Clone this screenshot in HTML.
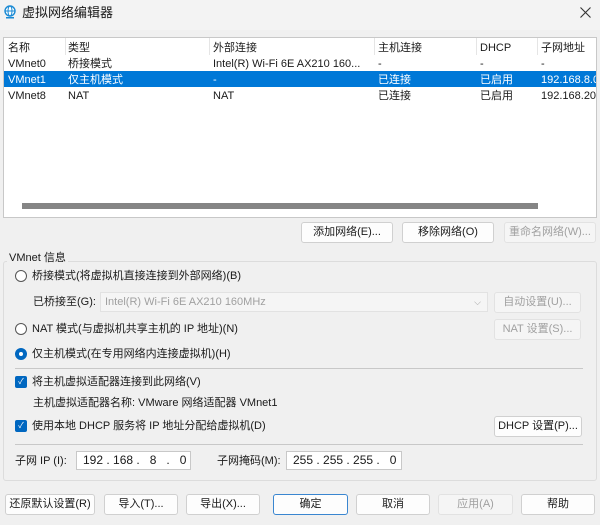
<!DOCTYPE html>
<html><head><meta charset="utf-8"><style>
*{margin:0;padding:0;box-sizing:border-box}
body{width:600px;height:525px;background:#f0f0f0;font-family:"Liberation Sans","Noto Sans CJK SC",sans-serif;font-size:11px;color:#1a1a1a;position:relative;overflow:hidden}
.a{position:absolute;white-space:nowrap;line-height:14px}
.btn{position:absolute;height:21px;background:#fdfdfd;border:1px solid #d0d0d0;border-radius:3px;text-align:center;line-height:19px;font-size:11px;white-space:nowrap;overflow:hidden}
.dis{background:#f5f5f5;color:#a0a0a0;border-color:#e2e2e2}
.radio{position:absolute;width:12px;height:12px;border:1px solid #555;border-radius:50%;background:#fff}
.chk{position:absolute;width:12px;height:12px;background:#0067c0;border-radius:2px;color:#fff;font-size:8px;line-height:12px;text-align:center}
.inp{position:absolute;height:19px;background:#fff;border:1px solid #c8c8c8;line-height:17px;padding-left:6px;white-space:nowrap;overflow:hidden;font-size:12px}
</style></head><body>
<div style="position:absolute;left:0;top:0;width:600px;height:30px;background:#f3f3f3"></div>
<svg style="position:absolute;left:4px;top:5px" width="12" height="14" viewBox="0 0 12 14"><circle cx="6" cy="6" r="5" fill="#fff" stroke="#1a8ad4" stroke-width="1.4"/><ellipse cx="6" cy="6" rx="2" ry="5" fill="none" stroke="#1a8ad4"/><line x1="1" y1="6" x2="11" y2="6" stroke="#1a8ad4"/><rect x="2" y="12" width="8" height="1.5" fill="#1a8ad4"/></svg>
<div class="a" style="left:22px;top:6px;font-size:13px">虚拟网络编辑器</div>
<svg style="position:absolute;left:580px;top:7px" width="11" height="11"><path d="M0.5 0.5L10.5 10.5M10.5 0.5L0.5 10.5" stroke="#333" stroke-width="1.1"/></svg>

<div style="position:absolute;left:3px;top:37px;width:594px;height:181px;background:#fff;border:1px solid #c8c8c8"></div>
<div style="position:absolute;left:4px;top:71px;width:592px;height:16px;background:#0078d7"></div>
<div style="position:absolute;left:22px;top:203px;width:516px;height:6px;background:#858585"></div>
<div class="a" style="left:8px;top:41px">名称</div><div class="a" style="left:68px;top:41px">类型</div><div class="a" style="left:213px;top:41px">外部连接</div><div class="a" style="left:378px;top:41px">主机连接</div><div class="a" style="left:480px;top:41px">DHCP</div><div class="a" style="left:541px;top:41px">子网地址</div>
<div style="position:absolute;left:65px;top:38px;width:1px;height:17px;background:#e5e5e5"></div>
<div style="position:absolute;left:209px;top:38px;width:1px;height:17px;background:#e5e5e5"></div>
<div style="position:absolute;left:374px;top:38px;width:1px;height:17px;background:#e5e5e5"></div>
<div style="position:absolute;left:476px;top:38px;width:1px;height:17px;background:#e5e5e5"></div>
<div style="position:absolute;left:537px;top:38px;width:1px;height:17px;background:#e5e5e5"></div>
<div class="a" style="left:8px;top:57px">VMnet0</div><div class="a" style="left:68px;top:57px">桥接模式</div><div class="a" style="left:213px;top:57px">Intel(R) Wi-Fi 6E AX210 160...</div><div class="a" style="left:378px;top:57px">-</div><div class="a" style="left:480px;top:57px">-</div><div class="a" style="left:541px;top:57px">-</div>
<div style="color:#fff"><div class="a" style="left:8px;top:73px">VMnet1</div><div class="a" style="left:68px;top:73px">仅主机模式</div><div class="a" style="left:213px;top:73px">-</div><div class="a" style="left:378px;top:73px">已连接</div><div class="a" style="left:480px;top:73px">已启用</div><div class="a" style="left:541px;top:73px">192.168.8.0</div></div>
<div style="position:absolute;left:596px;top:70px;width:4px;height:40px;background:#f0f0f0"></div>
<div class="a" style="left:8px;top:89px">VMnet8</div><div class="a" style="left:68px;top:89px">NAT</div><div class="a" style="left:213px;top:89px">NAT</div><div class="a" style="left:378px;top:89px">已连接</div><div class="a" style="left:480px;top:89px">已启用</div><div class="a" style="left:541px;top:89px">192.168.20</div>
<div style="position:absolute;left:596px;top:38px;width:1px;height:179px;background:#c8c8c8"></div>

<div class="btn" style="left:301px;top:222px;width:92px">添加网络(E)...</div>
<div class="btn" style="left:402px;top:222px;width:92px">移除网络(O)</div>
<div class="btn dis" style="left:504px;top:222px;width:92px">重命名网络(W)...</div>

<div style="position:absolute;left:3px;top:261px;width:594px;height:220px;border:1px solid #dcdcdc;border-radius:3px"></div>
<div class="a" style="left:7px;top:251px;background:#f0f0f0;padding:0 2px">VMnet 信息</div>
<div class="radio" style="left:15px;top:270px"></div><div class="a" style="left:32px;top:269px">桥接模式(将虚拟机直接连接到外部网络)(B)</div>
<div class="a" style="left:33px;top:295px">已桥接至(G):</div>
<div class="inp" style="left:100px;top:292px;width:388px;height:20px;background:#f5f5f5;border-color:#e2e2e2;color:#a0a0a0;line-height:18px;padding-left:4px;font-size:11px">Intel(R) Wi-Fi 6E AX210 160MHz<span style="position:absolute;right:6px;font-size:9px">⌵</span></div>
<div class="btn dis" style="left:494px;top:292px;width:87px">自动设置(U)...</div>
<div class="radio" style="left:15px;top:323px"></div><div class="a" style="left:32px;top:322px">NAT 模式(与虚拟机共享主机的 IP 地址)(N)</div>
<div class="btn dis" style="left:494px;top:319px;width:87px">NAT 设置(S)...</div>
<div class="radio" style="left:15px;top:348px;border:4px solid #0067c0"></div><div class="a" style="left:32px;top:347px">仅主机模式(在专用网络内连接虚拟机)(H)</div>
<div style="position:absolute;left:15px;top:368px;width:568px;height:1px;background:#c8c8c8"></div>
<div class="chk" style="left:15px;top:376px">✓</div><div class="a" style="left:32px;top:375px">将主机虚拟适配器连接到此网络(V)</div>
<div class="a" style="left:33px;top:396px">主机虚拟适配器名称: VMware 网络适配器 VMnet1</div>
<div class="chk" style="left:15px;top:420px">✓</div><div class="a" style="left:32px;top:419px">使用本地 DHCP 服务将 IP 地址分配给虚拟机(D)</div>
<div class="btn" style="left:494px;top:416px;width:88px">DHCP 设置(P)...</div>
<div style="position:absolute;left:15px;top:444px;width:568px;height:1px;background:#c8c8c8"></div>
<div class="a" style="left:15px;top:454px">子网 IP (I):</div>
<div class="inp" style="left:76px;top:451px;width:115px">192 . 168 .&nbsp;&nbsp; 8&nbsp;&nbsp; .&nbsp;&nbsp; 0</div>
<div class="a" style="left:217px;top:454px">子网掩码(M):</div>
<div class="inp" style="left:286px;top:451px;width:116px">255 . 255 . 255 .&nbsp;&nbsp; 0</div>

<div class="btn" style="left:5px;top:494px;width:90px">还原默认设置(R)</div>
<div class="btn" style="left:104px;top:494px;width:74px">导入(T)...</div>
<div class="btn" style="left:186px;top:494px;width:74px">导出(X)...</div>
<div class="btn" style="left:273px;top:494px;width:75px;border-color:#3a86d0">确定</div>
<div class="btn" style="left:356px;top:494px;width:74px">取消</div>
<div class="btn dis" style="left:438px;top:494px;width:75px">应用(A)</div>
<div class="btn" style="left:521px;top:494px;width:74px">帮助</div>
</body></html>
